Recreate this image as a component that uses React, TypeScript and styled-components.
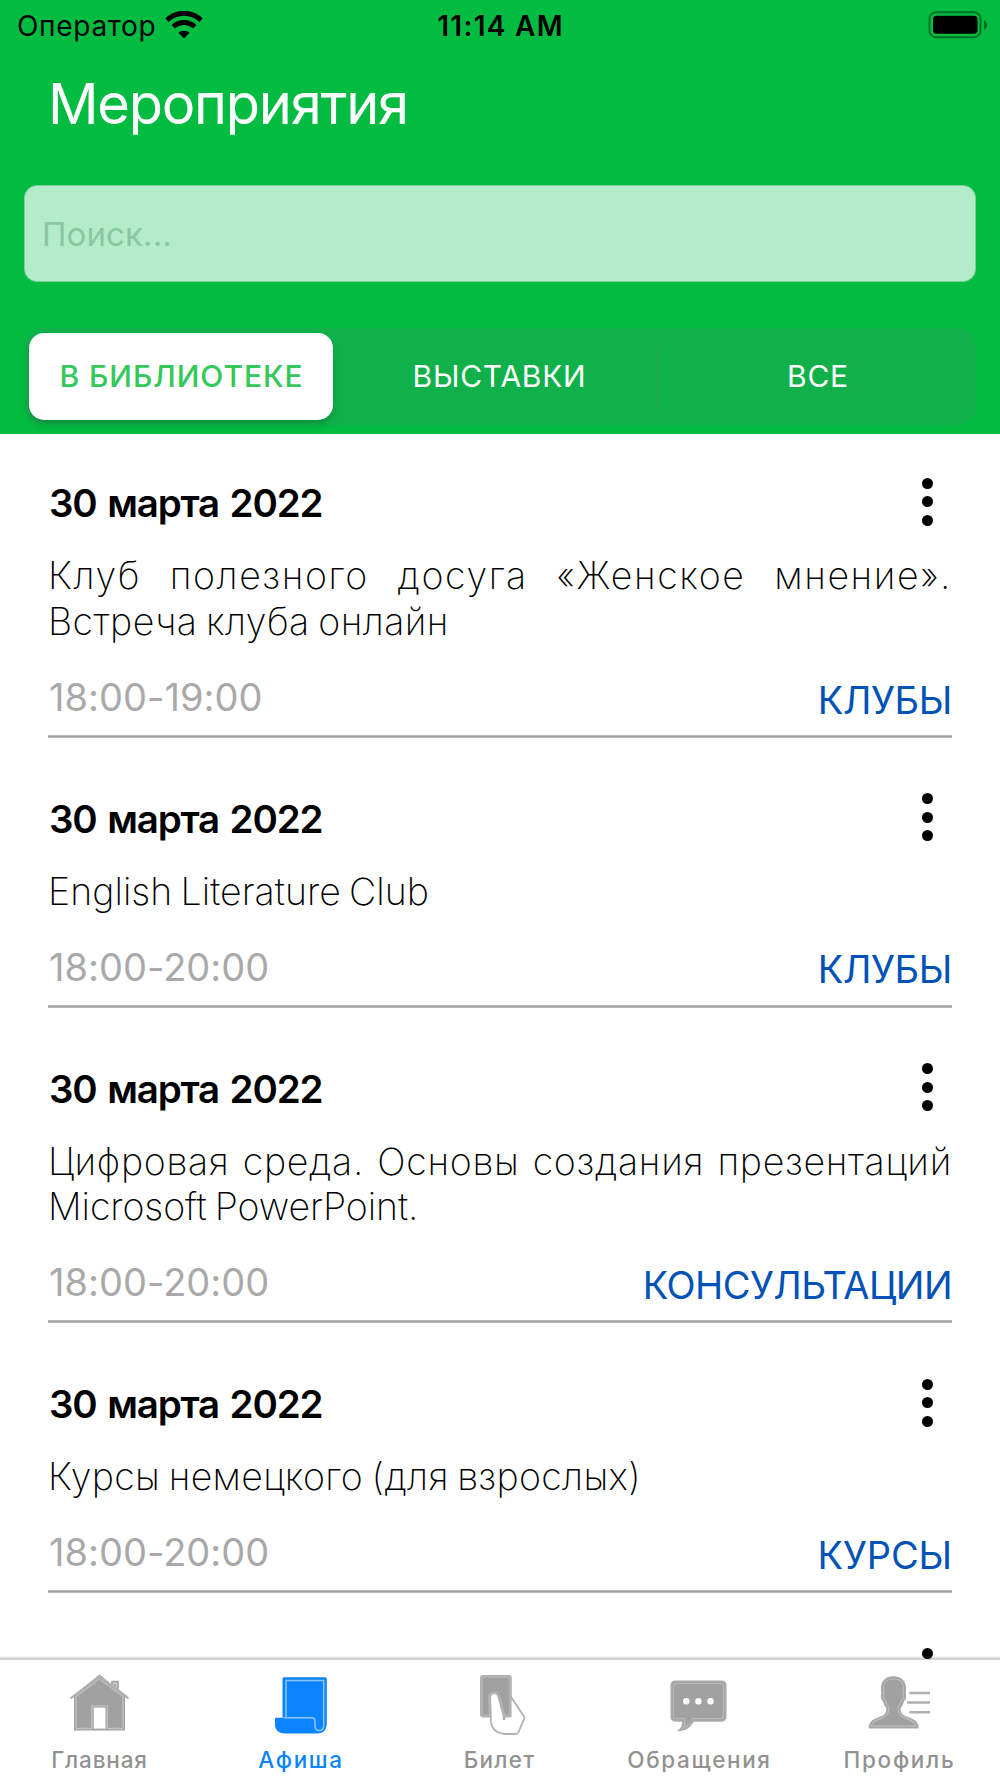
import React from 'react';
import styled, { createGlobalStyle } from 'styled-components';

const Global = createGlobalStyle`
  * { box-sizing: border-box; }
  body { margin: 0; background: #fff; font-family: Inter, "Liberation Sans", sans-serif; }
`;

const Screen = styled.div`
  width: 1000px;
  height: 1778px;
  display: flex;
  flex-direction: column;
  overflow: hidden;
  background: #fff;
`;

const Header = styled.header`
  height: 434px;
  flex: none;
  background: #02bc41;
  display: flex;
  flex-direction: column;
`;

const StatusBar = styled.div`
  height: 50px;
  display: grid;
  grid-template-columns: 1fr auto 1fr;
  align-items: center;
  padding: 0 12px 0 17px;
  color: #000;
  font-size: 28px;
`;

const Carrier = styled.div`
  display: flex;
  align-items: center;
  gap: 9px;
  letter-spacing: 0.7px;
`;

const CarrierName = styled.span`
  padding-top: 1px;
`;

const Clock = styled.div`
  padding-top: 1px;
  font-weight: 600;
  letter-spacing: 1.28px;
  margin-right: 4px;
`;

const Battery = styled.div`
  display: flex;
  justify-content: flex-end;
`;

const Title = styled.h1`
  margin: 19px 0 0 48px;
  font-size: 56px;
  line-height: 70px;
  font-weight: 400;
  letter-spacing: -1.25px;
  color: #fff;
`;

const Search = styled.input`
  margin: 46px 24px 0;
  height: 97px;
  flex: none;
  padding: 0 17px;
  border: 1px solid #7fcf9b;
  border-radius: 13px;
  background: #b3ecc9;
  font: 400 33px/40px Inter, sans-serif;
  letter-spacing: 0.1px;
  color: #1d3b28;
  outline: none;
  &::placeholder { color: #8ac7a0; opacity: 1; }
`;

const Segments = styled.div`
  margin: 46px 24px 0;
  height: 97px;
  flex: none;
  display: grid;
  grid-template-columns: 314px 1fr 317px;
  padding: 5px 0 5px 5px;
  border-radius: 19px;
  background: #10b14a;
`;

const Segment = styled.button<{ $active?: boolean; $divided?: boolean }>`
  border: 0;
  padding: ${p => (p.$divided ? '0 3px 2px 0' : '0 0 2px 1px')};
  margin-right: ${p => (p.$active ? '10px' : '0')};
  border-radius: ${p => (p.$active ? '15px' : '0')};
  background: ${p => (p.$active
    ? '#fff'
    : p.$divided
      ? 'linear-gradient(#22a94f, #22a94f) right center / 2px 62px no-repeat'
      : 'none')};
  box-shadow: ${p => (p.$active ? '0 5px 10px rgba(0, 0, 0, 0.13), 0 3px 2px rgba(0, 0, 0, 0.06)' : 'none')};
  color: ${p => (p.$active ? '#34c759' : '#fff')};
  font: ${p => (p.$active ? 500 : 400)} 30px/36px Inter, sans-serif;
  letter-spacing: ${p => (p.$active ? 0.95 : 0.75)}px;
`;

const List = styled.main`
  height: 1226px;
  flex: none;
  overflow: hidden;
  background: linear-gradient(#fff, #e4e4e4 40%, #c6c6c6 75%, #dedede) left bottom / 100% 4px no-repeat;
`;

const Card = styled.article`
  padding: 46.4px 48px 11.4px;
`;

const CardHead = styled.div`
  height: 46px;
  display: flex;
  justify-content: space-between;
  align-items: center;
`;

const EventDate = styled.h2`
  margin: 0 0 0 1px;
  font-size: 38.5px;
  line-height: 46px;
  font-weight: 600;
  letter-spacing: -1.15px;
  word-spacing: 2px;
  color: #000;
`;

const MenuButton = styled.button`
  width: 12px;
  height: 50px;
  margin: -3px 19px 0 auto;
  padding: 0;
  border: 0;
  background: none;
  display: flex;
  flex-direction: column;
  align-items: center;
  justify-content: center;
  gap: 7.5px;
`;

const Dot = styled.span`
  width: 11px;
  height: 11px;
  flex: none;
  border-radius: 50%;
  background: #000;
`;

const Name = styled.div`
  margin-top: 27px;
  font-size: 37.5px;
  font-weight: 200;
  line-height: 45.7px;
  color: #000;
`;

const Line = styled.div<{ $spacing?: number; $justify?: boolean }>`
  white-space: nowrap;
  letter-spacing: ${p => p.$spacing ?? 0}px;
  word-spacing: ${p => (p.$justify ? 0 : -2.4)}px;
  text-align-last: ${p => (p.$justify ? 'justify' : 'left')};
`;

const CardFoot = styled.div`
  margin-top: 29.3px;
  height: 61px;
  display: flex;
  justify-content: space-between;
  align-items: flex-start;
  font-size: 38px;
  line-height: 46px;
`;

const Time = styled.span`
  margin-left: 1px;
  letter-spacing: 0.02px;
  color: #a9a9a9;
`;

const Category = styled.span<{ $spacing: number }>`
  margin-top: 2.5px;
  color: #0052b6;
  letter-spacing: ${p => p.$spacing}px;
`;

const Rule = styled.div`
  height: 3px;
  background: linear-gradient(#b9b9b9 33%, #a0a0a0 33%, #a0a0a0 66%, #b9b9b9 66%);
`;

const TabBar = styled.nav`
  height: 118px;
  flex: none;
  display: grid;
  grid-template-columns: repeat(5, 1fr);
  background: #fff;
`;

const Tab = styled.a<{ $active?: boolean; $spacing: number }>`
  display: flex;
  flex-direction: column;
  align-items: center;
  padding-top: 12px;
  gap: 10px;
  color: ${p => (p.$active ? '#0b84ff' : '#929292')};
  font-size: 22.5px;
  font-weight: 500;
  line-height: 28px;
  letter-spacing: ${p => p.$spacing}px;
`;

const TabLabel = styled.span<{ $active?: boolean }>`
  margin-left: ${p => (p.$active ? '2px' : '-1px')};
`;

const Icon = ({ children }: { children: React.ReactNode }) => (
  <svg width="64" height="64" viewBox="0 0 64 64" fill="none">{children}</svg>
);

const HomeIcon = () => (
  <Icon>
    <path d="M31.5 2.5 2 26l1 1 3-1.8V58.5h51V25.2l3 1.8 1-1L50.8 17.5V8.7h-7.6v3.2Z" fill="#a1a1a1" />
    <path d="M3.5 25.5 31.5 4.5 60 25.5" stroke="#b4b4b4" strokeWidth="1.6" />
    <path d="M45.5 13.5v-2.3h3v4.6" stroke="#d2d2d2" strokeWidth="1.3" />
    <path d="M8 24.5V56.5h15.7V33.8h15.6V56.5H55V24.5L31.5 7Z" stroke="#c0c0c0" strokeWidth="1.3" />
    <path d="M25.7 35.6h11.8v21H25.7z" fill="#fff" />
  </Icon>
);

const PosterIcon = () => (
  <Icon>
    <path d="M16 5.3h41.3a1.5 1.5 0 0 1 1.5 1.5V51c0 6.5-3.5 10.5-9 10.5H17C10.5 61.5 7 57.5 7 52.5V47a1.3 1.3 0 0 1 1.3-1.3h6.2V6.8A1.5 1.5 0 0 1 16 5.3Z" fill="#0b84ff" />
    <path d="M15.5 45.8h28q3.5 0 3.5 3.5V53.5c0 3 1.5 5 4.2 5s4.5-2 4.5-5V8.6H18v37" stroke="#8ec6ff" strokeWidth="1.5" />
  </Icon>
);

const TicketIcon = () => (
  <Icon>
    <rect x="13.5" y="4.5" width="28.8" height="39.5" rx="1.5" fill="#a1a1a1" stroke="#b2b2b2" strokeWidth="3" />
    <path d="M22.8 47 22 26.5C21.8 20.3 29 19.5 30.5 25L36 45.5H43.2L56 44.5q.8 1.2.2 2.3L50.5 60q-.8 2-3 2H38C28 61.5 22.8 56 22.8 47Z" fill="#fff" />
    <path d="M42.5 45.5V25L56 44.5v2Z" fill="#fff" />
    <path d="M22.3 45 21.6 26C21.4 19.3 29.5 18.8 31 24.8L36 43" stroke="#b2b2b2" strokeWidth="3" />
    <path d="M43 25 56 44.5q.8 1.2.2 2.3L50.5 60q-.8 2-3 2H38C28 61.5 22.8 56 22.8 47V44" stroke="#b2b2b2" strokeWidth="1.8" />
    <path d="M42.3 24v20H36v4" stroke="#b2b2b2" strokeWidth="2.6" />
  </Icon>
);

const ChatIcon = () => (
  <Icon>
    <path d="M7.5 9.3h46q4.3 0 4.3 4.3v31q0 4.3-4.3 4.3H25.5C22 55 17 58.5 10.8 58.5 14.5 55.5 15.5 52.5 14.5 48.9h-7q-4.3 0-4.3-4.3v-31q0-4.3 4.3-4.3Z" fill="#a1a1a1" stroke="#acacac" strokeWidth="1.5" />
    <path d="M8 11.5h45q2.6 0 2.6 2.6v30q0 2.6-2.6 2.6H24.5C22 52 19 54.5 15 56.5c2-3 2.5-6 1.5-9.8H8q-2.6 0-2.6-2.6v-30q0-2.6 2.6-2.6Z" stroke="#b8b8b8" strokeWidth="1.2" />
    <circle cx="18.3" cy="29.3" r="3.2" fill="#fff" />
    <circle cx="30.4" cy="29.3" r="3.2" fill="#fff" />
    <circle cx="42.5" cy="29.3" r="3.2" fill="#fff" />
  </Icon>
);

const ProfileIcon = () => (
  <Icon>
    <path d="M25.5 4.8c7.5 0 12 4.5 12 11.5l-.4 6.2c1.2 1.2.4 5-1.6 6.5-.8 3.7-2 5.5-3.5 7 0 5.5 1.5 7 6 8.8 7.5 2.7 12 4.7 12 11.2H1.3c0-6.5 4.2-8.5 11.7-11.2 4.5-1.8 6-3.3 6-8.8-1.5-1.5-2.7-3.3-3.5-7-2-1.5-2.8-5.3-1.6-6.5l-.4-6.2C13.5 9.3 18 4.8 25.5 4.8Z" fill="#a1a1a1" stroke="#acacac" strokeWidth="1.2" />
    <path d="M25.5 7c6.5 0 10 3.5 10 9.5l-.3 7c.8 1-.2 3.5-1.5 4.5-.7 3.5-2 5.5-3.7 7.2 0 7 2 8.8 7.2 10.9 6 2.2 9.8 3.9 10.6 8.1H3.3c.8-4.2 4.5-5.9 10.5-8.1C19 44 21 42.2 21 35.2c-1.7-1.7-3-3.7-3.7-7.2-1.3-1-2.3-3.5-1.5-4.5l-.3-7C15.5 10.5 19 7 25.5 7Z" stroke="#bdbdbd" strokeWidth="1.2" />
    <path d="M41.3 21H62M39 30.5h23M41.3 40.3H62" stroke="#b0b0b0" strokeWidth="2.4" />
  </Icon>
);

const WifiIcon = () => (
  <svg width="38" height="28" viewBox="0 0 38 28" fill="none">
    <path d="M2 9.2C11.5-.1 26.5-.1 36 9.2" stroke="#000" strokeWidth="5" />
    <path d="M8.3 15.8c6-5.7 15.4-5.7 21.4 0" stroke="#000" strokeWidth="5" />
    <path d="M19 27.5l-5.6-5.7c3.2-2.9 8-2.9 11.2 0Z" fill="#000" />
  </svg>
);

const BatteryIcon = () => (
  <svg width="60" height="28" viewBox="0 0 60 28" fill="none">
    <rect x="1.5" y="1.3" width="51" height="25" rx="6.5" stroke="#000" strokeOpacity="0.4" strokeWidth="1.9" />
    <rect x="5" y="4.7" width="44.5" height="18" rx="3.5" fill="#000" />
    <path d="M56 9.2c4 1.5 4 8 0 9.5Z" fill="#000" fillOpacity="0.45" />
  </svg>
);

type TitleLine = { text: string; spacing?: number; justify?: boolean };
type EventItem = { date: string; lines: TitleLine[]; time: string; category: string; spacing: number };

const events: EventItem[] = [
  {
    date: '30 марта 2022',
    lines: [
      { text: 'Клуб полезного досуга «Женское мнение».', spacing: 1.6, justify: true },
      { text: 'Встреча клуба онлайн', spacing: 0.45 },
    ],
    time: '18:00-19:00',
    category: 'КЛУБЫ',
    spacing: -0.35,
  },
  {
    date: '30 марта 2022',
    lines: [{ text: 'English Literature Club', spacing: 0.04 }],
    time: '18:00-20:00',
    category: 'КЛУБЫ',
    spacing: -0.35,
  },
  {
    date: '30 марта 2022',
    lines: [
      { text: 'Цифровая среда. Основы создания презентаций', spacing: 0.7, justify: true },
      { text: 'Microsoft PowerPoint.', spacing: -0.08 },
    ],
    time: '18:00-20:00',
    category: 'КОНСУЛЬТАЦИИ',
    spacing: -0.52,
  },
  {
    date: '30 марта 2022',
    lines: [{ text: 'Курсы немецкого (для взрослых)', spacing: 0.34 }],
    time: '18:00-20:00',
    category: 'КУРСЫ',
    spacing: -0.1,
  },
];

const Menu = () => (
  <MenuButton aria-haspopup="menu">
    <Dot />
    <Dot />
    <Dot />
  </MenuButton>
);

const EventCard = ({ event }: { event: EventItem }) => (
  <Card>
    <CardHead>
      <EventDate>{event.date}</EventDate>
      <Menu />
    </CardHead>
    <Name>
      {event.lines.map(line => (
        <Line key={line.text} $spacing={line.spacing} $justify={line.justify}>{line.text}</Line>
      ))}
    </Name>
    <CardFoot>
      <Time>{event.time}</Time>
      <Category $spacing={event.spacing}>{event.category}</Category>
    </CardFoot>
    <Rule />
  </Card>
);

const tabs = [
  { label: 'Главная', spacing: 0.82, icon: <HomeIcon /> },
  { label: 'Афиша', spacing: 1.66, icon: <PosterIcon />, active: true },
  { label: 'Билет', spacing: 1.26, icon: <TicketIcon /> },
  { label: 'Обращения', spacing: 1.64, icon: <ChatIcon /> },
  { label: 'Профиль', spacing: 1.72, icon: <ProfileIcon /> },
];

export default function App() {
  return (
    <Screen>
      <Global />
      <Header>
        <StatusBar>
          <Carrier><CarrierName>Оператор</CarrierName><WifiIcon /></Carrier>
          <Clock>11:14 AM</Clock>
          <Battery><BatteryIcon /></Battery>
        </StatusBar>
        <Title>Мероприятия</Title>
        <Search placeholder="Поиск..." />
        <Segments>
          <Segment $active>В БИБЛИОТЕКЕ</Segment>
          <Segment $divided>ВЫСТАВКИ</Segment>
          <Segment>ВСЕ</Segment>
        </Segments>
      </Header>
      <List>
        {events.map((event, i) => <EventCard key={i} event={event} />)}
        <Card>
          <CardHead><Menu /></CardHead>
        </Card>
      </List>
      <TabBar>
        {tabs.map(tab => (
          <Tab key={tab.label} $spacing={tab.spacing} $active={tab.active}>
            {tab.icon}
            <TabLabel $active={tab.active}>{tab.label}</TabLabel>
          </Tab>
        ))}
      </TabBar>
    </Screen>
  );
}
